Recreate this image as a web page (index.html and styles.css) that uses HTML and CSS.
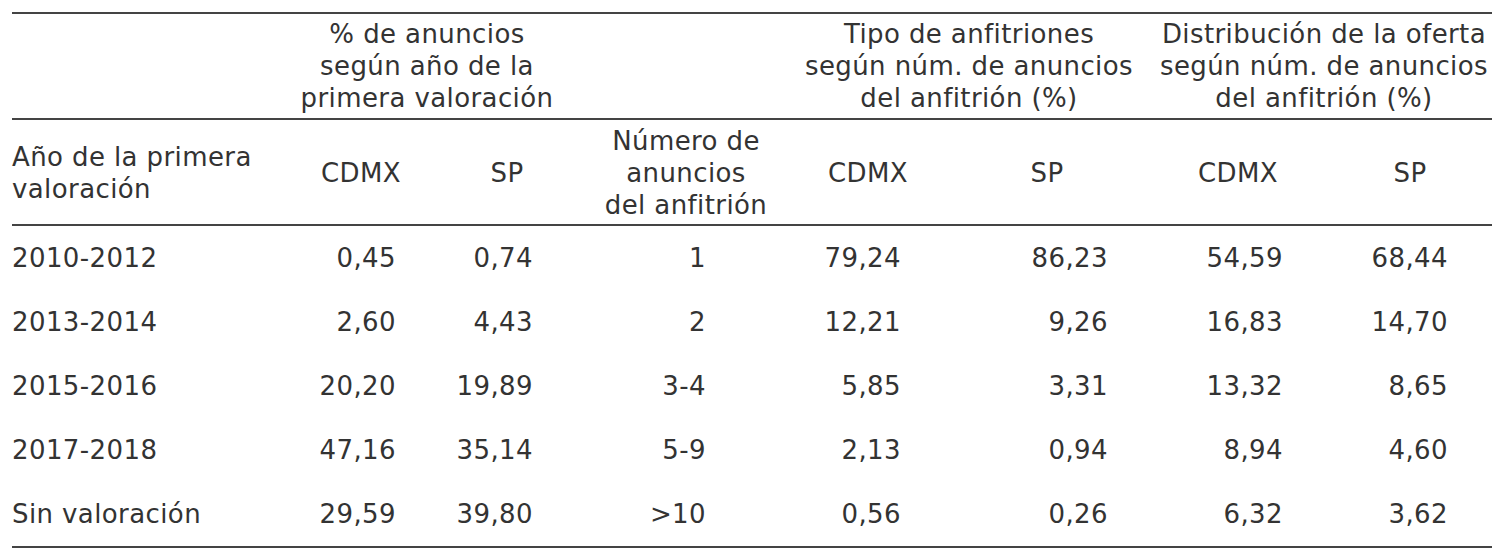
FILE: index.html
```html
<!DOCTYPE html>
<html lang="es">
<head>
<meta charset="utf-8">
<title>Tabla</title>
<link rel="stylesheet" href="styles.css">
</head>
<body>
<table class="data">
  <colgroup>
    <col class="c1"><col class="c2"><col class="c3"><col class="c4">
    <col class="c5"><col class="c6"><col class="c7"><col class="c8">
  </colgroup>
  <thead>
    <tr class="group">
      <th></th>
      <th colspan="2" class="g1">% de anuncios<br>según año de la<br>primera valoración</th>
      <th></th>
      <th colspan="2">Tipo de anfitriones<br>según núm. de anuncios<br>del anfitrión (%)</th>
      <th colspan="2" class="g3">Distribución de la oferta<br>según núm. de anuncios<br>del anfitrión (%)</th>
    </tr>
    <tr class="sub">
      <th class="left">Año de la primera<br>valoración</th>
      <th>CDMX</th>
      <th>SP</th>
      <th>Número de<br>anuncios<br>del anfitrión</th>
      <th>CDMX</th>
      <th>SP</th>
      <th>CDMX</th>
      <th>SP</th>
    </tr>
  </thead>
  <tbody>
    <tr>
      <td class="left">2010-2012</td><td class="v2">0,45</td><td class="v3">0,74</td><td class="v4">1</td>
      <td class="v5">79,24</td><td class="v6">86,23</td><td class="v7">54,59</td><td class="v8">68,44</td>
    </tr>
    <tr>
      <td class="left">2013-2014</td><td class="v2">2,60</td><td class="v3">4,43</td><td class="v4">2</td>
      <td class="v5">12,21</td><td class="v6">9,26</td><td class="v7">16,83</td><td class="v8">14,70</td>
    </tr>
    <tr>
      <td class="left">2015-2016</td><td class="v2">20,20</td><td class="v3">19,89</td><td class="v4">3-4</td>
      <td class="v5">5,85</td><td class="v6">3,31</td><td class="v7">13,32</td><td class="v8">8,65</td>
    </tr>
    <tr>
      <td class="left">2017-2018</td><td class="v2">47,16</td><td class="v3">35,14</td><td class="v4">5-9</td>
      <td class="v5">2,13</td><td class="v6">0,94</td><td class="v7">8,94</td><td class="v8">4,60</td>
    </tr>
    <tr>
      <td class="left">Sin valoración</td><td class="v2">29,59</td><td class="v3">39,80</td><td class="v4">&gt;10</td>
      <td class="v5">0,56</td><td class="v6">0,26</td><td class="v7">6,32</td><td class="v8">3,62</td>
    </tr>
  </tbody>
</table>
</body>
</html>
```
FILE: styles.css
```css
html, body {
  margin: 0;
  padding: 0;
  background: #ffffff;
}

body {
  padding: 12px 10px 0 12px;
}

.data {
  width: 1480px;
  table-layout: fixed;
  border-collapse: collapse;
  font-family: "DejaVu Sans", Verdana, sans-serif;
  font-size: 26px;
  line-height: 32px;
  letter-spacing: 0.4px;
  color: #333333;
  border-top: 2px solid #444444;
  border-bottom: 2px solid #444444;
}

.c1 { width: 278px; }
.c2 { width: 142px; }
.c3 { width: 150px; }
.c4 { width: 208px; }
.c5 { width: 156px; }
.c6 { width: 202px; }
.c7 { width: 180px; }
.c8 { width: 164px; }

.data th {
  font-weight: normal;
  text-align: center;
  vertical-align: middle;
  padding: 0;
  white-space: nowrap;
}

.data th.left,
.data td.left {
  text-align: left;
}

.group th {
  padding: 4px 0 4px 0;
  border-bottom: 2px solid #444444;
}

.group th.g1 {
  padding-right: 18px;
}

.group th.g3 {
  padding-left: 8px;
}

.sub th {
  padding: 5px 0 3px 0;
  border-bottom: 2px solid #444444;
}

.data td {
  padding: 16px 0;
  text-align: right;
  white-space: nowrap;
}

.data td.v2 { padding-right: 36px; }
.data td.v3 { padding-right: 49px; }
.data td.v4 { padding-right: 84px; }
.data td.v5 { padding-right: 45px; }
.data td.v6 { padding-right: 40px; }
.data td.v7 { padding-right: 45px; }
.data td.v8 { padding-right: 44px; }
```
